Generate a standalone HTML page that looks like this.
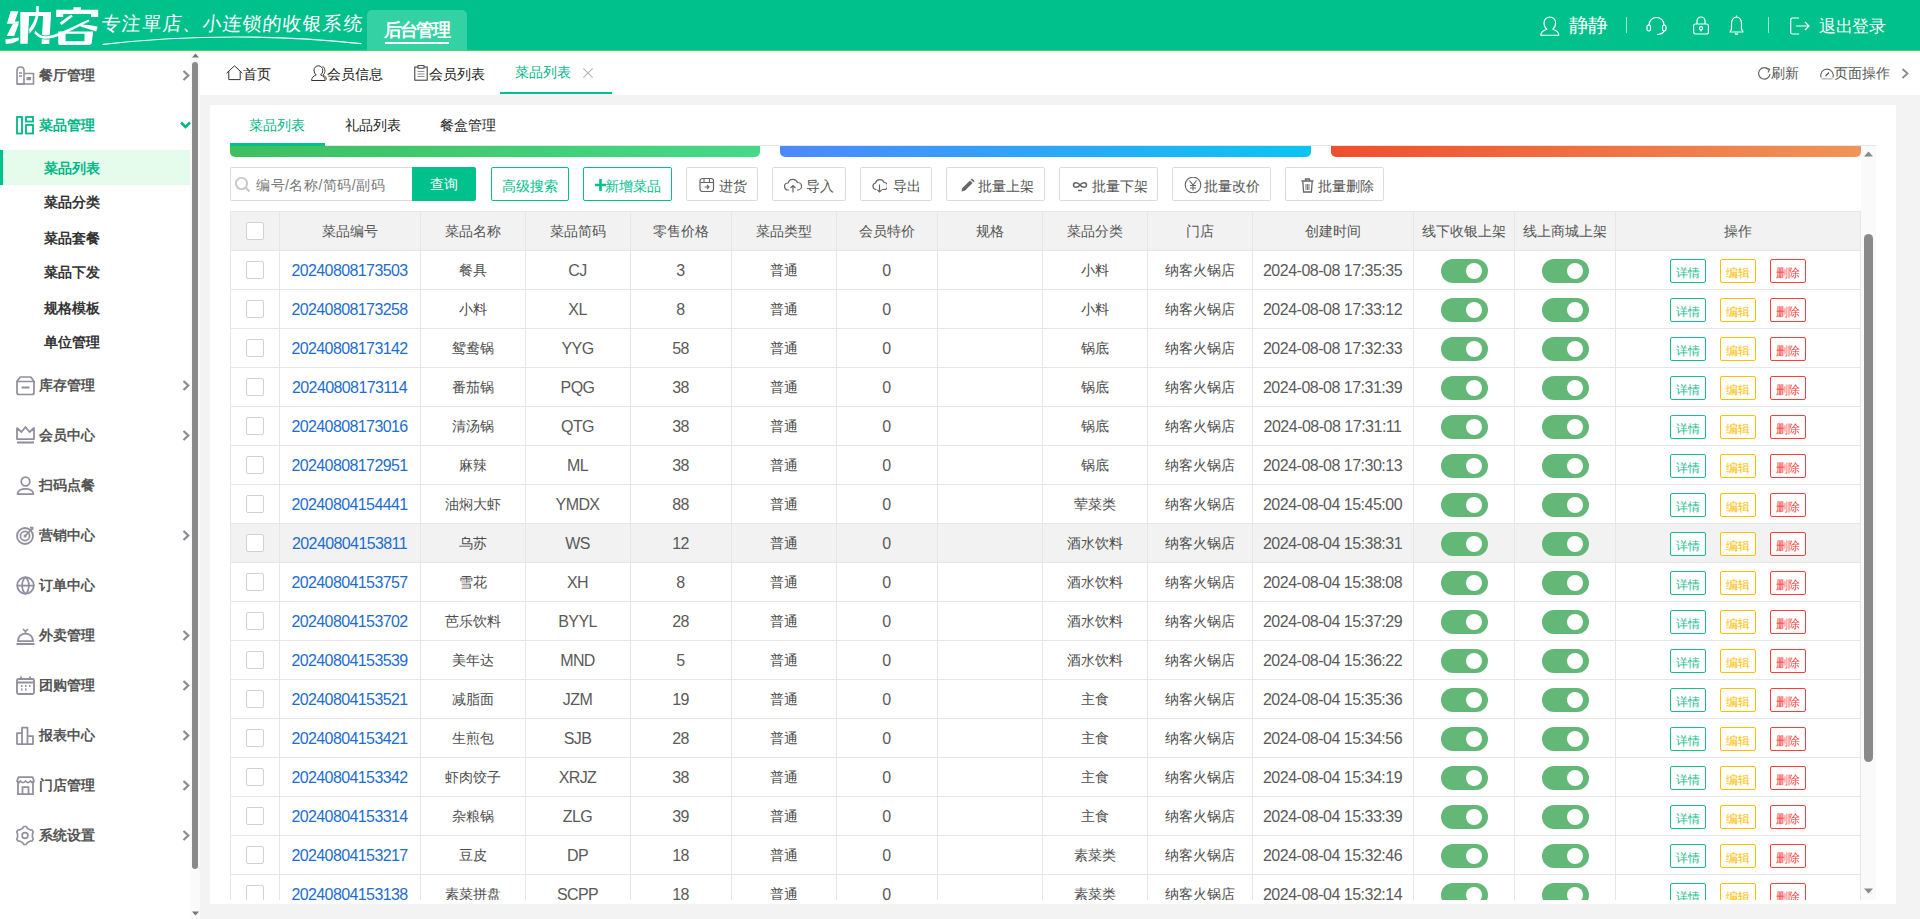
<!DOCTYPE html><html><head><meta charset="utf-8"><title>菜品列表</title><style>
*{box-sizing:border-box;margin:0;padding:0}
html,body{width:1920px;height:919px;overflow:hidden;background:#f3f3f3;font-family:"Liberation Sans",sans-serif;color:#333}
.a{position:absolute;white-space:nowrap}
.ic{position:absolute;overflow:visible}
#hdr{position:absolute;left:0;top:0;width:1920px;height:50px;background:#00c18c}
#hdrline{position:absolute;left:0;top:50px;width:1920px;height:1px;background:#4cd270}
#side{position:absolute;left:0;top:51px;width:190px;height:868px;background:#fff}
#strack{position:absolute;left:190px;top:51px;width:10px;height:868px;background:#fafafa}
#tabbar{position:absolute;left:200px;top:51px;width:1720px;height:44px;background:#fff}
#card{position:absolute;left:210px;top:105px;width:1686px;height:799px;background:#fff}
.mi{position:absolute;left:39px;font-size:14px;font-weight:bold;color:#555;line-height:20px}
.si{position:absolute;left:44px;font-size:14px;font-weight:bold;color:#333;line-height:20px}
.t14{font-size:14px;line-height:20px}
.btn{position:absolute;top:167px;height:34px;border:1px solid #dcdcdc;border-radius:2px;background:#fff;color:#555;font-size:14px;line-height:32px}
.btn span{position:absolute;top:1px}
.cell{position:absolute;text-align:center;font-size:14px;line-height:20px;color:#4e4e4e}
.hcell{position:absolute;text-align:center;font-size:14px;line-height:20px;color:#555}
.vl{position:absolute;width:1px;background:#e6e6e6}
.hl{position:absolute;height:1px;background:#e6e6e6}
.cb{position:absolute;width:18px;height:18px;border:1px solid #d2d2d2;border-radius:2px;background:#fff}
.sw{position:absolute;width:47px;height:24px;border-radius:12px;background:#63b877}
.sw i{position:absolute;left:25px;top:4px;width:16px;height:16px;border-radius:50%;background:#fff}
.ob{position:absolute;width:36px;height:24px;border:1px solid;border-radius:2px;font-size:12px;line-height:26px;text-align:center;background:#fff}
</style></head><body>
<div id="hdr"></div><div id="hdrline"></div>
<svg class="ic" style="left:0;top:0;width:100px;height:50px" viewBox="0 0 100 50"><g fill="#fff">
<path d="M10.6 11.3 L18.4 11.3 L14.9 21.6 L19 21.6 L18.4 23.8 L6.9 23.8 Z"/>
<path d="M12.8 23.8 L18.8 23.8 L14.2 36 L6.6 36 Z"/>
<path d="M5.3 39.6 L18.8 37.6 L18.8 40.2 L12.5 43.3 L5.9 43.9 Z"/>
<path d="M20.3 12 L51 12 L51 16 L29.2 16 L27.6 43.8 L20.3 43.8 Z"/>
<path d="M43.2 15 L51 15 L49.2 44 L41.5 44 Z"/>
<path d="M36.2 6 L38.8 6 L38.8 13 C38 22 34 29 29.5 33.5 L29.2 29 C32.5 24 35.5 19 36.2 13 Z"/>
<path d="M35 30.5 C39 34.5 42 36.5 46 36.3 C56 36 72 27 88.5 19.6 L89.5 21.2 C74 29 57 38.8 45.5 38.8 C40.5 38.8 37.5 36.5 34.5 33.3 Z" stroke="#00c18c" stroke-width="1.6"/><path d="M35 30.5 C39 34.5 42 36.5 46 36.3 C56 36 72 27 88.5 19.6 L89.5 21.2 C74 29 57 38.8 45.5 38.8 C40.5 38.8 37.5 36.5 34.5 33.3 Z"/>
<path d="M73.4 7.3 L81 7.3 L81 10.2 L73.4 10.2 Z"/>
<path d="M56.2 9.7 L98.2 9.7 L98.2 16.9 L91 16.9 L91 14 L63.2 14 L63.2 16.9 L56.2 16.9 Z"/>
<path d="M59.7 22.7 L71.2 14.6 L72.8 16.6 L61.6 24.9 Z"/>
<path d="M80.2 24.6 C86 24.6 92 25.5 97.6 26.4 L96.2 31.6 C91 30 86 28 80.8 26.8 Z"/>
<path fill-rule="evenodd" d="M58.2 31.5 L93.2 31.5 L91.8 42.5 C91.5 44.5 90 45 88 45 L60 45 C58.5 45 58.2 44 58.2 42.5 Z M65.6 33.8 L84.5 33.8 L84.5 41.3 L65.6 41.3 Z"/>
</g></svg>
<div class="a" style="left:102px;top:12px;font-size:19px;line-height:24px;color:#fff;letter-spacing:1.1px;font-weight:400;transform:skewX(-6deg)">专注單店、小连锁的收银系统</div>
<svg class="ic" style="left:100px;top:34px;width:264px;height:14px" viewBox="0 0 264 14"><path d="M3 10.4 Q130 -4 261 9.6" stroke="#fff" stroke-width="1.2" fill="none" stroke-linecap="round"/></svg>
<div class="a" style="left:367px;top:10px;width:100px;height:40px;background:#33d1a3;border-radius:5px 5px 0 0"></div>
<div class="a" style="left:384px;top:18px;font-size:18px;line-height:24px;font-weight:bold;color:#fff;letter-spacing:-1.8px">后台管理</div>
<div class="a" style="left:385px;top:42px;width:64px;height:2px;background:#fff"></div>
<svg class="ic" style="left:1540px;top:16px;width:20px;height:20px" viewBox="0 0 20 20" ><path d="M0.8 19.2 Q0.8 15 6.8 13.2 Q4 11 4 6.8 A5.8 5.8 0 0 1 15.6 6.8 Q15.6 11 12.8 13.2 Q18.8 15 18.8 19.2 Z" stroke="#fff" stroke-width="1.15" fill="none" stroke-linejoin="round"/></svg>
<div class="a" style="left:1569px;top:13px;font-size:20px;line-height:24px;color:#fff;letter-spacing:-1.5px;font-weight:500">静静</div>
<div class="a" style="left:1626px;top:17px;width:1px;height:16px;background:rgba(255,255,255,0.6)"></div>
<svg class="ic" style="left:1646px;top:15px;width:21px;height:20px" viewBox="0 0 21 20" ><path d="M3 11 V10 A7.5 7.5 0 0 1 18 10 V11" stroke="#fff" stroke-width="1.2" fill="none"/><rect x="1" y="10" width="3.5" height="6" rx="1.7" stroke="#fff" stroke-width="1.2" fill="none"/><rect x="16.5" y="10" width="3.5" height="6" rx="1.7" stroke="#fff" stroke-width="1.2" fill="none"/><path d="M18 16 Q17 19 11 19.5" stroke="#fff" stroke-width="1.2" fill="none"/></svg>
<svg class="ic" style="left:1693px;top:15px;width:16px;height:20px" viewBox="0 0 16 20" ><path d="M4 9 V6 A4 4 0 0 1 12 6 V9" stroke="#fff" stroke-width="1.2" fill="none"/><rect x="0.6" y="9" width="14.8" height="10" rx="2" stroke="#fff" stroke-width="1.2" fill="none"/><circle cx="8" cy="13.2" r="1.6" stroke="#fff" stroke-width="1.1" fill="none"/><path d="M8 14.8 V16.5" stroke="#fff" stroke-width="1.1"/></svg>
<svg class="ic" style="left:1729px;top:15px;width:15px;height:20px" viewBox="0 0 15 20" ><path d="M7.5 2 C3 2.5 2.5 6 2.5 9 V14 L1 17 H14 L12.5 14 V9 C12.5 6 12 2.5 7.5 2 Z" stroke="#fff" stroke-width="1.2" fill="none" stroke-linejoin="round"/><path d="M6 18.5 Q7.5 20 9 18.5" stroke="#fff" stroke-width="1.2" fill="none"/><path d="M7.5 0.5 V2" stroke="#fff" stroke-width="1.2"/></svg>
<div class="a" style="left:1768px;top:17px;width:1px;height:16px;background:rgba(255,255,255,0.6)"></div>
<svg class="ic" style="left:1790px;top:17px;width:20px;height:18px" viewBox="0 0 20 18" ><path d="M9 1 H2.5 A1.8 1.8 0 0 0 0.7 2.8 V15.2 A1.8 1.8 0 0 0 2.5 17 H9" stroke="#fff" stroke-width="1.2" fill="none"/><path d="M6 9 H19 M15 5 L19 9 L15 13" stroke="#fff" stroke-width="1.2" fill="none"/></svg>
<div class="a" style="left:1819px;top:15px;font-size:16.5px;line-height:22px;color:#fff;letter-spacing:-0.3px">退出登录</div>
<div id="side"></div><div id="strack"></div>
<div class="a" style="left:192px;top:62px;width:6px;height:807px;background:#8a8a8a;border-radius:3px"></div>
<svg class="ic" style="left:192px;top:53px;width:7px;height:5px" viewBox="0 0 7 5"><path d="M0 4.5 L3.5 0.5 L7 4.5Z" fill="#777"/></svg>
<svg class="ic" style="left:192px;top:911px;width:7px;height:5px" viewBox="0 0 7 5"><path d="M0 0.5 L3.5 4.5 L7 0.5Z" fill="#777"/></svg>
<svg class="ic" style="left:16px;top:66px;width:19px;height:19px" viewBox="0 0 19 19" ><path d="M1 18 V4.5 Q1 1 4.5 1 Q8 1 8 4.5 V18 Z" stroke="#918e9e" stroke-width="1.6" fill="none"/><path d="M8 7.5 H17.5 V18 H1" stroke="#918e9e" stroke-width="1.6" fill="none"/><path d="M3 7 H6 M3 10 H6" stroke="#918e9e" stroke-width="1.3"/><rect x="10.5" y="11" width="4.5" height="3.2" fill="#918e9e"/></svg>
<div class="mi" style="top:65px">餐厅管理</div>
<svg class="ic" style="left:182px;top:70px;width:8px;height:11px" viewBox="0 0 8 11"><path d="M1.5 1 L6.3 5.5 L1.5 10" stroke="#8a8a96" stroke-width="2.2" fill="none"/></svg>
<svg class="ic" style="left:16px;top:376px;width:19px;height:19px" viewBox="0 0 19 19" ><path d="M1 5.5 V16.5 Q1 18.5 3 18.5 H16 Q18 18.5 18 16.5 V5.5" stroke="#918e9e" stroke-width="1.7" fill="none"/><path d="M0.8 5.5 L4.3 1 H14.7 L18.2 5.5 Z" stroke="#918e9e" stroke-width="1.7" fill="none" stroke-linejoin="round"/><path d="M6.3 11.5 H12.7" stroke="#918e9e" stroke-width="1.9" stroke-linecap="round"/></svg>
<div class="mi" style="top:375px">库存管理</div>
<svg class="ic" style="left:182px;top:380px;width:8px;height:11px" viewBox="0 0 8 11"><path d="M1.5 1 L6.3 5.5 L1.5 10" stroke="#8a8a96" stroke-width="2.2" fill="none"/></svg>
<svg class="ic" style="left:16px;top:426px;width:19px;height:19px" viewBox="0 0 19 19" ><path d="M1 13 V2 L5.5 6 L9.5 1 L13.5 6 L18 2 V13 Z" stroke="#918e9e" stroke-width="1.75" fill="none" stroke-linejoin="round"/><path d="M1 16.5 H18" stroke="#918e9e" stroke-width="2.05"/></svg>
<div class="mi" style="top:425px">会员中心</div>
<svg class="ic" style="left:182px;top:430px;width:8px;height:11px" viewBox="0 0 8 11"><path d="M1.5 1 L6.3 5.5 L1.5 10" stroke="#8a8a96" stroke-width="2.2" fill="none"/></svg>
<svg class="ic" style="left:16px;top:476px;width:19px;height:19px" viewBox="0 0 19 19" ><circle cx="9.5" cy="5.5" r="4.3" stroke="#918e9e" stroke-width="1.75" fill="none"/><path d="M1.5 18 C2 11 17 11 17.5 18 Z" stroke="#918e9e" stroke-width="1.75" fill="none" stroke-linejoin="round"/></svg>
<div class="mi" style="top:475px">扫码点餐</div>
<svg class="ic" style="left:16px;top:526px;width:19px;height:19px" viewBox="0 0 19 19" ><circle cx="9" cy="10" r="8" stroke="#918e9e" stroke-width="1.85" fill="none"/><circle cx="9" cy="10" r="4.6" stroke="#918e9e" stroke-width="1.75" fill="none"/><circle cx="9" cy="10" r="1.5" fill="#918e9e"/><path d="M9 10 L16 3 M14 1.5 L16.5 1.5 L16.5 4" stroke="#918e9e" stroke-width="1.75" fill="none"/></svg>
<div class="mi" style="top:525px">营销中心</div>
<svg class="ic" style="left:182px;top:530px;width:8px;height:11px" viewBox="0 0 8 11"><path d="M1.5 1 L6.3 5.5 L1.5 10" stroke="#8a8a96" stroke-width="2.2" fill="none"/></svg>
<svg class="ic" style="left:16px;top:576px;width:19px;height:19px" viewBox="0 0 19 19" ><circle cx="9.5" cy="9.5" r="8.3" stroke="#918e9e" stroke-width="1.85" fill="none"/><path d="M1.2 9.5 H17.8 M9.5 1.2 C5 5 5 14 9.5 17.8 M9.5 1.2 C14 5 14 14 9.5 17.8" stroke="#918e9e" stroke-width="1.75" fill="none"/></svg>
<div class="mi" style="top:575px">订单中心</div>
<svg class="ic" style="left:16px;top:626px;width:19px;height:19px" viewBox="0 0 19 19" ><path d="M2 15 A7.5 7.5 0 0 1 17 15 Z" stroke="#918e9e" stroke-width="1.75" fill="none"/><path d="M0.5 18 H18.5" stroke="#918e9e" stroke-width="1.95"/><path d="M7 3 L9.5 5.5 L12 3 M9.5 5.5 V7.5" stroke="#918e9e" stroke-width="1.65" fill="none"/></svg>
<div class="mi" style="top:625px">外卖管理</div>
<svg class="ic" style="left:182px;top:630px;width:8px;height:11px" viewBox="0 0 8 11"><path d="M1.5 1 L6.3 5.5 L1.5 10" stroke="#8a8a96" stroke-width="2.2" fill="none"/></svg>
<svg class="ic" style="left:16px;top:676px;width:19px;height:19px" viewBox="0 0 19 19" ><rect x="1" y="3" width="17" height="15" rx="1.5" stroke="#918e9e" stroke-width="1.85" fill="none"/><path d="M1 6.5 H18 M5 0.5 V4 M14 0.5 V4" stroke="#918e9e" stroke-width="1.85"/><path d="M5 10 H6.5 M9 10 H10.5 M13 10 H14.5 M5 13.5 H6.5 M9 13.5 H10.5" stroke="#918e9e" stroke-width="1.85"/></svg>
<div class="mi" style="top:675px">团购管理</div>
<svg class="ic" style="left:182px;top:680px;width:8px;height:11px" viewBox="0 0 8 11"><path d="M1.5 1 L6.3 5.5 L1.5 10" stroke="#8a8a96" stroke-width="2.2" fill="none"/></svg>
<svg class="ic" style="left:16px;top:726px;width:19px;height:19px" viewBox="0 0 19 19" ><path d="M1 18 V7 H6 V18 M6 18 V1.5 H11.5 V18 M11.5 18 V10 H17 V18 Z M0.5 18 H17.5" stroke="#918e9e" stroke-width="1.75" fill="none" stroke-linejoin="round"/></svg>
<div class="mi" style="top:725px">报表中心</div>
<svg class="ic" style="left:182px;top:730px;width:8px;height:11px" viewBox="0 0 8 11"><path d="M1.5 1 L6.3 5.5 L1.5 10" stroke="#8a8a96" stroke-width="2.2" fill="none"/></svg>
<svg class="ic" style="left:16px;top:776px;width:19px;height:19px" viewBox="0 0 19 19" ><path d="M2 5 V18 H17 V5" stroke="#918e9e" stroke-width="1.75" fill="none"/><path d="M1 5 L2.5 1 H16.5 L18 5 Q16.5 8 14.5 5 Q12 8 9.5 5 Q7 8 4.5 5 Q2.5 8 1 5Z" stroke="#918e9e" stroke-width="1.75" fill="none" stroke-linejoin="round"/><path d="M6.5 18 V11 H12.5 V18" stroke="#918e9e" stroke-width="1.75" fill="none"/></svg>
<div class="mi" style="top:775px">门店管理</div>
<svg class="ic" style="left:182px;top:780px;width:8px;height:11px" viewBox="0 0 8 11"><path d="M1.5 1 L6.3 5.5 L1.5 10" stroke="#8a8a96" stroke-width="2.2" fill="none"/></svg>
<svg class="ic" style="left:16px;top:826px;width:19px;height:19px" viewBox="0 0 19 19" ><path d="M6.65 2.27 L7.87 0.57 L10.13 0.57 L11.35 2.27 L14.09 3.85 L16.17 4.06 L17.30 6.01 L16.43 7.92 L16.43 11.08 L17.30 12.99 L16.17 14.94 L14.09 15.15 L11.35 16.73 L10.13 18.43 L7.87 18.43 L6.65 16.73 L3.91 15.15 L1.83 14.94 L0.70 12.99 L1.57 11.08 L1.57 7.92 L0.70 6.01 L1.83 4.06 L3.91 3.85Z" stroke="#918e9e" stroke-width="1.6" fill="none" stroke-linejoin="round"/><circle cx="9" cy="9.5" r="2.9" stroke="#918e9e" stroke-width="1.7" fill="none"/></svg>
<div class="mi" style="top:825px">系统设置</div>
<svg class="ic" style="left:182px;top:830px;width:8px;height:11px" viewBox="0 0 8 11"><path d="M1.5 1 L6.3 5.5 L1.5 10" stroke="#8a8a96" stroke-width="2.2" fill="none"/></svg>
<svg class="ic" style="left:16px;top:116px;width:19px;height:19px" viewBox="0 0 19 19" ><rect x="1" y="1" width="5" height="16.5" stroke="#00b887" stroke-width="1.8" fill="none"/><rect x="10" y="1" width="7" height="4.5" stroke="#00b887" stroke-width="1.8" fill="none"/><rect x="10" y="9" width="7" height="8.5" stroke="#00b887" stroke-width="1.8" fill="none"/></svg>
<div class="mi" style="top:115px;color:#00b887">菜品管理</div>
<svg class="ic" style="left:180px;top:121px;width:11px;height:8px" viewBox="0 0 11 8"><path d="M1 1.5 L5.5 6 L10 1.5" stroke="#00b887" stroke-width="2.5" fill="none"/></svg>
<div class="a" style="left:0;top:150px;width:190px;height:35px;background:#e5fbeb"></div>
<div class="a" style="left:0;top:150px;width:3px;height:35px;background:#00c18c"></div>
<div class="si" style="top:158px;color:#00b887">菜品列表</div>
<div class="si" style="top:192px;color:#333">菜品分类</div>
<div class="si" style="top:228px;color:#333">菜品套餐</div>
<div class="si" style="top:262px;color:#333">菜品下发</div>
<div class="si" style="top:298px;color:#333">规格模板</div>
<div class="si" style="top:332px;color:#333">单位管理</div>
<div id="tabbar"></div>
<svg class="ic" style="left:226px;top:65px;width:17px;height:16px" viewBox="0 0 17 16" ><path d="M0.6 8.2 L8.5 0.8 L16.4 8.2 M2.8 6.2 V14.6 H14.2 V6.2" stroke="#333" stroke-width="1" fill="none"/></svg>
<div class="a t14" style="left:243px;top:64px;color:#222">首页</div>
<svg class="ic" style="left:311px;top:65px;width:16px;height:16px" viewBox="0 0 16 16" ><path d="M0.6 15.5 Q0.6 11.5 5.2 10 Q3 8.4 3 5.2 A4.4 4.4 0 0 1 11.8 5.2 Q11.8 8.4 9.6 10 Q14.2 11.5 14.2 15.5 Z" stroke="#333" stroke-width="1" fill="none" stroke-linejoin="round"/><path d="M11.5 1.3 Q14.5 2.5 14 6.5 Q13.6 9 12 10 Q15.6 11.5 15.6 14.5" stroke="#333" stroke-width="0.9" fill="none"/></svg>
<div class="a t14" style="left:327px;top:64px;color:#222">会员信息</div>
<svg class="ic" style="left:414px;top:65px;width:14px;height:16px" viewBox="0 0 14 16" ><rect x="0.8" y="2" width="12.4" height="13.2" stroke="#333" stroke-width="1" fill="none"/><rect x="4" y="0.6" width="6" height="2.6" stroke="#333" stroke-width="0.9" fill="#fff"/><path d="M3.5 6.5 H10.5 M3.5 9 H10.5 M3.5 11.5 H10.5" stroke="#777" stroke-width="0.8"/></svg>
<div class="a t14" style="left:429px;top:64px;color:#222">会员列表</div>
<div class="a t14" style="left:515px;top:62px;color:#00b887">菜品列表</div>
<svg class="ic" style="left:583px;top:68px;width:10px;height:10px" viewBox="0 0 10 10"><path d="M0.3 0.3 L9.7 9.7 M9.7 0.3 L0.3 9.7" stroke="#b8b8b8" stroke-width="1.2"/></svg>
<div class="a" style="left:500px;top:92px;width:112px;height:2px;background:#00c18c"></div>
<svg class="ic" style="left:1758px;top:67px;width:13px;height:13px" viewBox="0 0 13 13" ><path d="M10.5 2.5 A5.7 5.7 0 1 0 12 7" stroke="#666" stroke-width="1.2" fill="none"/><path d="M8 1 L11.5 2.3 L10 5.5" stroke="#666" stroke-width="1.2" fill="none"/></svg>
<div class="a t14" style="left:1771px;top:63px;color:#555">刷新</div>
<svg class="ic" style="left:1820px;top:67px;width:14px;height:13px" viewBox="0 0 14 13" ><path d="M1.2 10.5 A6.2 6.2 0 1 1 12.8 10.5" stroke="#666" stroke-width="1.15" fill="none"/><path d="M1.5 11.8 H12.5" stroke="#c2c2c2" stroke-width="1.6"/><path d="M5.5 9 L9 5.5" stroke="#555" stroke-width="1.2"/></svg>
<div class="a t14" style="left:1834px;top:63px;color:#555">页面操作</div>
<svg class="ic" style="left:1901px;top:68px;width:8px;height:11px" viewBox="0 0 8 11"><path d="M1.5 1 L6.5 5.5 L1.5 10" stroke="#8a8a96" stroke-width="1.8" fill="none"/></svg>
<div id="card"></div>
<div class="a t14" style="left:249px;top:115px;color:#00b887">菜品列表</div>
<div class="a t14" style="left:345px;top:115px;color:#222">礼品列表</div>
<div class="a t14" style="left:440px;top:115px;color:#222">餐盒管理</div>
<div class="a" style="left:230px;top:145px;width:1646px;height:1px;background:#e6e6e6"></div>
<div class="a" style="left:230px;top:143px;width:95px;height:3px;background:#00c18c;z-index:2"></div>
<div class="a" style="left:230px;top:146px;width:1646px;height:754px;overflow:hidden">
<div class="a" style="left:0;top:0;width:530px;height:11px;border-radius:0 0 5px 5px;background:linear-gradient(90deg,#3dbf60,#46d98a)"></div>
<div class="a" style="left:550px;top:0;width:531px;height:11px;border-radius:0 0 5px 5px;background:linear-gradient(90deg,#4e88fd,#0bc5f1)"></div>
<div class="a" style="left:1101px;top:0;width:530px;height:11px;border-radius:0 0 5px 5px;background:linear-gradient(90deg,#f04e2e,#f09459)"></div>
<div class="a" style="left:1631px;top:0;width:15px;height:754px;background:#fafafa"></div>
<svg class="ic" style="left:1634px;top:5px;width:9px;height:6px" viewBox="0 0 9 6"><path d="M0 5.5 L4.5 0.5 L9 5.5Z" fill="#888"/></svg>
<svg class="ic" style="left:1634px;top:742px;width:9px;height:6px" viewBox="0 0 9 6"><path d="M0 0.5 L4.5 5.5 L9 0.5Z" fill="#888"/></svg>
<div class="a" style="left:1634px;top:88px;width:9px;height:528px;background:#8a8a8a;border-radius:4.5px"></div>
<div class="a" style="left:0;top:21px;width:183px;height:34px;border:1px solid #dcdcdc;border-right:none;border-radius:2px 0 0 2px;background:#fff"></div>
<svg class="ic" style="left:5px;top:31px;width:15px;height:15px" viewBox="0 0 15 15" ><circle cx="6.5" cy="6.5" r="5.6" stroke="#c8c8c8" stroke-width="1.9" fill="none"/><path d="M10.5 10.5 L14.5 14.5" stroke="#c8c8c8" stroke-width="2.2"/></svg>
<div class="a t14" style="left:26px;top:29px;color:#777;letter-spacing:0.5px">编号/名称/简码/副码</div>
<div class="a" style="left:182px;top:21px;width:64px;height:34px;background:#00c18c;border-radius:0 2px 2px 0;color:#fff;font-size:14px;line-height:34px;text-align:center">查询</div>
<div class="btn" style="left:261px;width:78px;top:21px;border-color:#00c18c;color:#00c18c"><span style="left:10px;top:2px">高级搜索</span></div>
<div class="btn" style="left:353px;width:89px;top:21px;border-color:#00c18c;color:#00c18c"><svg style="position:absolute;left:11px;top:9px;width:11px;height:16px" viewBox="0 0 11 16"><path d="M5.5 2 V14 M0 8 H11" stroke="#00c18c" stroke-width="2.6"/></svg><span style="left:21px;top:2px">新增菜品</span></div>
<div class="btn" style="left:456px;width:72px;top:21px;border-color:#dcdcdc;color:#555"><svg style="position:absolute;left:12px;top:9px;width:16px;height:16px" viewBox="0 0 16 16"><rect x="1" y="1.5" width="13.5" height="13" rx="2.5" stroke="#666" stroke-width="1.2" fill="none"/><path d="M1 5.5 H14.5 M5 1.5 V5.5 M10.5 1.5 V5.5" stroke="#666" stroke-width="1.1"/><path d="M5.5 10 H10 M8 8 L10 10 L8 12" stroke="#666" stroke-width="1.1" fill="none"/></svg><span style="left:32px;top:2px">进货</span></div>
<div class="btn" style="left:542px;width:74px;top:21px;border-color:#dcdcdc;color:#555"><svg style="position:absolute;left:11px;top:9px;width:18px;height:16px" viewBox="0 0 18 16"><path d="M5 13 H4 A3.5 3.5 0 0 1 4 6 A5 5 0 0 1 13.5 5.5 A3.7 3.7 0 0 1 14 13 H13" stroke="#666" stroke-width="1.2" fill="none"/><path d="M9 15.5 V8.5 M6.5 11 L9 8.5 L11.5 11" stroke="#666" stroke-width="1.2" fill="none"/></svg><span style="left:33px;top:2px">导入</span></div>
<div class="btn" style="left:630px;width:72px;top:21px;border-color:#dcdcdc;color:#555"><svg style="position:absolute;left:11px;top:9px;width:15px;height:16px" viewBox="0 0 15 16"><path d="M4.5 12.5 H4 A3.3 3.3 0 0 1 3.5 6 A4.5 4.5 0 0 1 12 5.5 A3.4 3.4 0 0 1 12 12.5 H10" stroke="#666" stroke-width="1.2" fill="none"/><path d="M7.5 7.5 V15 M5.3 12.8 L7.5 15 L9.7 12.8" stroke="#666" stroke-width="1.2" fill="none"/></svg><span style="left:32px;top:2px">导出</span></div>
<div class="btn" style="left:716px;width:99px;top:21px;border-color:#dcdcdc;color:#555"><svg style="position:absolute;left:13px;top:9px;width:16px;height:16px" viewBox="0 0 16 16"><path d="M1.5 14.5 L2.2 11.2 L10 3.4 L12.6 6 L4.8 13.8 Z" fill="#666"/><path d="M10.8 2.6 L12 1.4 L14.6 4 L13.4 5.2Z" fill="#666"/></svg><span style="left:31px;top:2px">批量上架</span></div>
<div class="btn" style="left:829px;width:99px;top:21px;border-color:#dcdcdc;color:#555"><svg style="position:absolute;left:12px;top:9px;width:16px;height:16px" viewBox="0 0 16 16"><path d="M8 8 C6 5 1.5 5 1.5 8 C1.5 11 6 11 8 8 C10 5 14.5 5 14.5 8 C14.5 11 10 11 8 8" stroke="#666" stroke-width="1.5" fill="none"/><path d="M6 13.5 H10" stroke="#666" stroke-width="1.4"/></svg><span style="left:32px;top:2px">批量下架</span></div>
<div class="btn" style="left:942px;width:99px;top:21px;border-color:#dcdcdc;color:#555"><svg style="position:absolute;left:11px;top:9px;width:18px;height:16px" viewBox="0 0 18 16"><circle cx="9" cy="8" r="7.8" stroke="#666" stroke-width="1.1" fill="none"/><path d="M5.5 3.5 L9 8 L12.5 3.5 M9 8 V13.5 M6 8.5 H12 M6 11 H12" stroke="#666" stroke-width="1.1" fill="none"/></svg><span style="left:31px;top:2px">批量改价</span></div>
<div class="btn" style="left:1055px;width:99px;top:21px;border-color:#dcdcdc;color:#555"><svg style="position:absolute;left:14px;top:9px;width:15px;height:16px" viewBox="0 0 15 16"><path d="M1.5 4 H13.5 M5.5 4 V2 H9.5 V4" stroke="#666" stroke-width="1.3" fill="none"/><path d="M2.8 4.5 L3.6 15 H11.4 L12.2 4.5" stroke="#666" stroke-width="1.3" fill="none"/><path d="M6 7 V13 M7.5 7 V13 M9 7 V13" stroke="#666" stroke-width="0.9"/></svg><span style="left:32px;top:2px">批量删除</span></div>
<div class="a" style="left:0;top:65px;width:1631px;height:39px;background:#f2f2f2"></div>
<div class="a" style="left:0;top:377px;width:1631px;height:39px;background:#f2f2f2"></div>
<div class="hl" style="left:0;top:65px;width:1631px"></div>
<div class="hl" style="left:0;top:104px;width:1631px"></div>
<div class="hl" style="left:0;top:143px;width:1631px"></div>
<div class="hl" style="left:0;top:182px;width:1631px"></div>
<div class="hl" style="left:0;top:221px;width:1631px"></div>
<div class="hl" style="left:0;top:260px;width:1631px"></div>
<div class="hl" style="left:0;top:299px;width:1631px"></div>
<div class="hl" style="left:0;top:338px;width:1631px"></div>
<div class="hl" style="left:0;top:377px;width:1631px"></div>
<div class="hl" style="left:0;top:416px;width:1631px"></div>
<div class="hl" style="left:0;top:455px;width:1631px"></div>
<div class="hl" style="left:0;top:494px;width:1631px"></div>
<div class="hl" style="left:0;top:533px;width:1631px"></div>
<div class="hl" style="left:0;top:572px;width:1631px"></div>
<div class="hl" style="left:0;top:611px;width:1631px"></div>
<div class="hl" style="left:0;top:650px;width:1631px"></div>
<div class="hl" style="left:0;top:689px;width:1631px"></div>
<div class="hl" style="left:0;top:728px;width:1631px"></div>
<div class="hl" style="left:0;top:767px;width:1631px"></div>
<div class="vl" style="left:0px;top:65px;height:703px"></div>
<div class="vl" style="left:49px;top:65px;height:703px"></div>
<div class="vl" style="left:190px;top:65px;height:703px"></div>
<div class="vl" style="left:295px;top:65px;height:703px"></div>
<div class="vl" style="left:400px;top:65px;height:703px"></div>
<div class="vl" style="left:501px;top:65px;height:703px"></div>
<div class="vl" style="left:606px;top:65px;height:703px"></div>
<div class="vl" style="left:707px;top:65px;height:703px"></div>
<div class="vl" style="left:812px;top:65px;height:703px"></div>
<div class="vl" style="left:917px;top:65px;height:703px"></div>
<div class="vl" style="left:1022px;top:65px;height:703px"></div>
<div class="vl" style="left:1183px;top:65px;height:703px"></div>
<div class="vl" style="left:1284px;top:65px;height:703px"></div>
<div class="vl" style="left:1385px;top:65px;height:703px"></div>
<div class="vl" style="left:1630px;top:65px;height:703px"></div>
<div class="cb" style="left:16px;top:76px"></div>
<div class="hcell" style="left:49px;width:141px;top:75px">菜品编号</div>
<div class="hcell" style="left:190px;width:105px;top:75px">菜品名称</div>
<div class="hcell" style="left:295px;width:105px;top:75px">菜品简码</div>
<div class="hcell" style="left:400px;width:101px;top:75px">零售价格</div>
<div class="hcell" style="left:501px;width:105px;top:75px">菜品类型</div>
<div class="hcell" style="left:606px;width:101px;top:75px">会员特价</div>
<div class="hcell" style="left:707px;width:105px;top:75px">规格</div>
<div class="hcell" style="left:812px;width:105px;top:75px">菜品分类</div>
<div class="hcell" style="left:917px;width:105px;top:75px">门店</div>
<div class="hcell" style="left:1022px;width:161px;top:75px">创建时间</div>
<div class="hcell" style="left:1183px;width:101px;top:75px">线下收银上架</div>
<div class="hcell" style="left:1284px;width:101px;top:75px">线上商城上架</div>
<div class="hcell" style="left:1385px;width:245px;top:75px">操作</div>
<div class="cb" style="left:16px;top:115px"></div>
<div class="cell" style="left:49px;width:141px;top:114px;color:#1d6dcf;font-size:16px;letter-spacing:-0.6px;top:115px">20240808173503</div>
<div class="cell" style="left:190px;width:105px;top:114px;">餐具</div>
<div class="cell" style="left:295px;width:105px;top:114px;color:#5a5a5a;font-size:16px;letter-spacing:-0.6px;top:115px">CJ</div>
<div class="cell" style="left:400px;width:101px;top:114px;color:#5a5a5a;font-size:16px;letter-spacing:-0.6px;top:115px">3</div>
<div class="cell" style="left:501px;width:105px;top:114px;">普通</div>
<div class="cell" style="left:606px;width:101px;top:114px;color:#5a5a5a;font-size:16px;letter-spacing:-0.6px;top:115px">0</div>
<div class="cell" style="left:707px;width:105px;top:114px;"></div>
<div class="cell" style="left:812px;width:105px;top:114px;">小料</div>
<div class="cell" style="left:917px;width:105px;top:114px;">纳客火锅店</div>
<div class="cell" style="left:1022px;width:161px;top:114px;color:#5a5a5a;font-size:16px;letter-spacing:-0.5px;top:115px">2024-08-08 17:35:35</div>
<div class="sw" style="left:1211px;top:113px"><i></i></div>
<div class="sw" style="left:1312px;top:113px"><i></i></div>
<div class="ob" style="left:1440px;top:113px;border-color:#19be8f;color:#19be8f">详情</div>
<div class="ob" style="left:1490px;top:113px;border-color:#ffbe00;color:#ffbe00">编辑</div>
<div class="ob" style="left:1540px;top:113px;border-color:#ff3d3d;color:#ff3d3d">删除</div>
<div class="cb" style="left:16px;top:154px"></div>
<div class="cell" style="left:49px;width:141px;top:153px;color:#1d6dcf;font-size:16px;letter-spacing:-0.6px;top:154px">20240808173258</div>
<div class="cell" style="left:190px;width:105px;top:153px;">小料</div>
<div class="cell" style="left:295px;width:105px;top:153px;color:#5a5a5a;font-size:16px;letter-spacing:-0.6px;top:154px">XL</div>
<div class="cell" style="left:400px;width:101px;top:153px;color:#5a5a5a;font-size:16px;letter-spacing:-0.6px;top:154px">8</div>
<div class="cell" style="left:501px;width:105px;top:153px;">普通</div>
<div class="cell" style="left:606px;width:101px;top:153px;color:#5a5a5a;font-size:16px;letter-spacing:-0.6px;top:154px">0</div>
<div class="cell" style="left:707px;width:105px;top:153px;"></div>
<div class="cell" style="left:812px;width:105px;top:153px;">小料</div>
<div class="cell" style="left:917px;width:105px;top:153px;">纳客火锅店</div>
<div class="cell" style="left:1022px;width:161px;top:153px;color:#5a5a5a;font-size:16px;letter-spacing:-0.5px;top:154px">2024-08-08 17:33:12</div>
<div class="sw" style="left:1211px;top:152px"><i></i></div>
<div class="sw" style="left:1312px;top:152px"><i></i></div>
<div class="ob" style="left:1440px;top:152px;border-color:#19be8f;color:#19be8f">详情</div>
<div class="ob" style="left:1490px;top:152px;border-color:#ffbe00;color:#ffbe00">编辑</div>
<div class="ob" style="left:1540px;top:152px;border-color:#ff3d3d;color:#ff3d3d">删除</div>
<div class="cb" style="left:16px;top:193px"></div>
<div class="cell" style="left:49px;width:141px;top:192px;color:#1d6dcf;font-size:16px;letter-spacing:-0.6px;top:193px">20240808173142</div>
<div class="cell" style="left:190px;width:105px;top:192px;">鸳鸯锅</div>
<div class="cell" style="left:295px;width:105px;top:192px;color:#5a5a5a;font-size:16px;letter-spacing:-0.6px;top:193px">YYG</div>
<div class="cell" style="left:400px;width:101px;top:192px;color:#5a5a5a;font-size:16px;letter-spacing:-0.6px;top:193px">58</div>
<div class="cell" style="left:501px;width:105px;top:192px;">普通</div>
<div class="cell" style="left:606px;width:101px;top:192px;color:#5a5a5a;font-size:16px;letter-spacing:-0.6px;top:193px">0</div>
<div class="cell" style="left:707px;width:105px;top:192px;"></div>
<div class="cell" style="left:812px;width:105px;top:192px;">锅底</div>
<div class="cell" style="left:917px;width:105px;top:192px;">纳客火锅店</div>
<div class="cell" style="left:1022px;width:161px;top:192px;color:#5a5a5a;font-size:16px;letter-spacing:-0.5px;top:193px">2024-08-08 17:32:33</div>
<div class="sw" style="left:1211px;top:191px"><i></i></div>
<div class="sw" style="left:1312px;top:191px"><i></i></div>
<div class="ob" style="left:1440px;top:191px;border-color:#19be8f;color:#19be8f">详情</div>
<div class="ob" style="left:1490px;top:191px;border-color:#ffbe00;color:#ffbe00">编辑</div>
<div class="ob" style="left:1540px;top:191px;border-color:#ff3d3d;color:#ff3d3d">删除</div>
<div class="cb" style="left:16px;top:232px"></div>
<div class="cell" style="left:49px;width:141px;top:231px;color:#1d6dcf;font-size:16px;letter-spacing:-0.6px;top:232px">20240808173114</div>
<div class="cell" style="left:190px;width:105px;top:231px;">番茄锅</div>
<div class="cell" style="left:295px;width:105px;top:231px;color:#5a5a5a;font-size:16px;letter-spacing:-0.6px;top:232px">PQG</div>
<div class="cell" style="left:400px;width:101px;top:231px;color:#5a5a5a;font-size:16px;letter-spacing:-0.6px;top:232px">38</div>
<div class="cell" style="left:501px;width:105px;top:231px;">普通</div>
<div class="cell" style="left:606px;width:101px;top:231px;color:#5a5a5a;font-size:16px;letter-spacing:-0.6px;top:232px">0</div>
<div class="cell" style="left:707px;width:105px;top:231px;"></div>
<div class="cell" style="left:812px;width:105px;top:231px;">锅底</div>
<div class="cell" style="left:917px;width:105px;top:231px;">纳客火锅店</div>
<div class="cell" style="left:1022px;width:161px;top:231px;color:#5a5a5a;font-size:16px;letter-spacing:-0.5px;top:232px">2024-08-08 17:31:39</div>
<div class="sw" style="left:1211px;top:230px"><i></i></div>
<div class="sw" style="left:1312px;top:230px"><i></i></div>
<div class="ob" style="left:1440px;top:230px;border-color:#19be8f;color:#19be8f">详情</div>
<div class="ob" style="left:1490px;top:230px;border-color:#ffbe00;color:#ffbe00">编辑</div>
<div class="ob" style="left:1540px;top:230px;border-color:#ff3d3d;color:#ff3d3d">删除</div>
<div class="cb" style="left:16px;top:271px"></div>
<div class="cell" style="left:49px;width:141px;top:270px;color:#1d6dcf;font-size:16px;letter-spacing:-0.6px;top:271px">20240808173016</div>
<div class="cell" style="left:190px;width:105px;top:270px;">清汤锅</div>
<div class="cell" style="left:295px;width:105px;top:270px;color:#5a5a5a;font-size:16px;letter-spacing:-0.6px;top:271px">QTG</div>
<div class="cell" style="left:400px;width:101px;top:270px;color:#5a5a5a;font-size:16px;letter-spacing:-0.6px;top:271px">38</div>
<div class="cell" style="left:501px;width:105px;top:270px;">普通</div>
<div class="cell" style="left:606px;width:101px;top:270px;color:#5a5a5a;font-size:16px;letter-spacing:-0.6px;top:271px">0</div>
<div class="cell" style="left:707px;width:105px;top:270px;"></div>
<div class="cell" style="left:812px;width:105px;top:270px;">锅底</div>
<div class="cell" style="left:917px;width:105px;top:270px;">纳客火锅店</div>
<div class="cell" style="left:1022px;width:161px;top:270px;color:#5a5a5a;font-size:16px;letter-spacing:-0.5px;top:271px">2024-08-08 17:31:11</div>
<div class="sw" style="left:1211px;top:269px"><i></i></div>
<div class="sw" style="left:1312px;top:269px"><i></i></div>
<div class="ob" style="left:1440px;top:269px;border-color:#19be8f;color:#19be8f">详情</div>
<div class="ob" style="left:1490px;top:269px;border-color:#ffbe00;color:#ffbe00">编辑</div>
<div class="ob" style="left:1540px;top:269px;border-color:#ff3d3d;color:#ff3d3d">删除</div>
<div class="cb" style="left:16px;top:310px"></div>
<div class="cell" style="left:49px;width:141px;top:309px;color:#1d6dcf;font-size:16px;letter-spacing:-0.6px;top:310px">20240808172951</div>
<div class="cell" style="left:190px;width:105px;top:309px;">麻辣</div>
<div class="cell" style="left:295px;width:105px;top:309px;color:#5a5a5a;font-size:16px;letter-spacing:-0.6px;top:310px">ML</div>
<div class="cell" style="left:400px;width:101px;top:309px;color:#5a5a5a;font-size:16px;letter-spacing:-0.6px;top:310px">38</div>
<div class="cell" style="left:501px;width:105px;top:309px;">普通</div>
<div class="cell" style="left:606px;width:101px;top:309px;color:#5a5a5a;font-size:16px;letter-spacing:-0.6px;top:310px">0</div>
<div class="cell" style="left:707px;width:105px;top:309px;"></div>
<div class="cell" style="left:812px;width:105px;top:309px;">锅底</div>
<div class="cell" style="left:917px;width:105px;top:309px;">纳客火锅店</div>
<div class="cell" style="left:1022px;width:161px;top:309px;color:#5a5a5a;font-size:16px;letter-spacing:-0.5px;top:310px">2024-08-08 17:30:13</div>
<div class="sw" style="left:1211px;top:308px"><i></i></div>
<div class="sw" style="left:1312px;top:308px"><i></i></div>
<div class="ob" style="left:1440px;top:308px;border-color:#19be8f;color:#19be8f">详情</div>
<div class="ob" style="left:1490px;top:308px;border-color:#ffbe00;color:#ffbe00">编辑</div>
<div class="ob" style="left:1540px;top:308px;border-color:#ff3d3d;color:#ff3d3d">删除</div>
<div class="cb" style="left:16px;top:349px"></div>
<div class="cell" style="left:49px;width:141px;top:348px;color:#1d6dcf;font-size:16px;letter-spacing:-0.6px;top:349px">20240804154441</div>
<div class="cell" style="left:190px;width:105px;top:348px;">油焖大虾</div>
<div class="cell" style="left:295px;width:105px;top:348px;color:#5a5a5a;font-size:16px;letter-spacing:-0.6px;top:349px">YMDX</div>
<div class="cell" style="left:400px;width:101px;top:348px;color:#5a5a5a;font-size:16px;letter-spacing:-0.6px;top:349px">88</div>
<div class="cell" style="left:501px;width:105px;top:348px;">普通</div>
<div class="cell" style="left:606px;width:101px;top:348px;color:#5a5a5a;font-size:16px;letter-spacing:-0.6px;top:349px">0</div>
<div class="cell" style="left:707px;width:105px;top:348px;"></div>
<div class="cell" style="left:812px;width:105px;top:348px;">荤菜类</div>
<div class="cell" style="left:917px;width:105px;top:348px;">纳客火锅店</div>
<div class="cell" style="left:1022px;width:161px;top:348px;color:#5a5a5a;font-size:16px;letter-spacing:-0.5px;top:349px">2024-08-04 15:45:00</div>
<div class="sw" style="left:1211px;top:347px"><i></i></div>
<div class="sw" style="left:1312px;top:347px"><i></i></div>
<div class="ob" style="left:1440px;top:347px;border-color:#19be8f;color:#19be8f">详情</div>
<div class="ob" style="left:1490px;top:347px;border-color:#ffbe00;color:#ffbe00">编辑</div>
<div class="ob" style="left:1540px;top:347px;border-color:#ff3d3d;color:#ff3d3d">删除</div>
<div class="cb" style="left:16px;top:388px"></div>
<div class="cell" style="left:49px;width:141px;top:387px;color:#1d6dcf;font-size:16px;letter-spacing:-0.6px;top:388px">20240804153811</div>
<div class="cell" style="left:190px;width:105px;top:387px;">乌苏</div>
<div class="cell" style="left:295px;width:105px;top:387px;color:#5a5a5a;font-size:16px;letter-spacing:-0.6px;top:388px">WS</div>
<div class="cell" style="left:400px;width:101px;top:387px;color:#5a5a5a;font-size:16px;letter-spacing:-0.6px;top:388px">12</div>
<div class="cell" style="left:501px;width:105px;top:387px;">普通</div>
<div class="cell" style="left:606px;width:101px;top:387px;color:#5a5a5a;font-size:16px;letter-spacing:-0.6px;top:388px">0</div>
<div class="cell" style="left:707px;width:105px;top:387px;"></div>
<div class="cell" style="left:812px;width:105px;top:387px;">酒水饮料</div>
<div class="cell" style="left:917px;width:105px;top:387px;">纳客火锅店</div>
<div class="cell" style="left:1022px;width:161px;top:387px;color:#5a5a5a;font-size:16px;letter-spacing:-0.5px;top:388px">2024-08-04 15:38:31</div>
<div class="sw" style="left:1211px;top:386px"><i></i></div>
<div class="sw" style="left:1312px;top:386px"><i></i></div>
<div class="ob" style="left:1440px;top:386px;border-color:#19be8f;color:#19be8f">详情</div>
<div class="ob" style="left:1490px;top:386px;border-color:#ffbe00;color:#ffbe00">编辑</div>
<div class="ob" style="left:1540px;top:386px;border-color:#ff3d3d;color:#ff3d3d">删除</div>
<div class="cb" style="left:16px;top:427px"></div>
<div class="cell" style="left:49px;width:141px;top:426px;color:#1d6dcf;font-size:16px;letter-spacing:-0.6px;top:427px">20240804153757</div>
<div class="cell" style="left:190px;width:105px;top:426px;">雪花</div>
<div class="cell" style="left:295px;width:105px;top:426px;color:#5a5a5a;font-size:16px;letter-spacing:-0.6px;top:427px">XH</div>
<div class="cell" style="left:400px;width:101px;top:426px;color:#5a5a5a;font-size:16px;letter-spacing:-0.6px;top:427px">8</div>
<div class="cell" style="left:501px;width:105px;top:426px;">普通</div>
<div class="cell" style="left:606px;width:101px;top:426px;color:#5a5a5a;font-size:16px;letter-spacing:-0.6px;top:427px">0</div>
<div class="cell" style="left:707px;width:105px;top:426px;"></div>
<div class="cell" style="left:812px;width:105px;top:426px;">酒水饮料</div>
<div class="cell" style="left:917px;width:105px;top:426px;">纳客火锅店</div>
<div class="cell" style="left:1022px;width:161px;top:426px;color:#5a5a5a;font-size:16px;letter-spacing:-0.5px;top:427px">2024-08-04 15:38:08</div>
<div class="sw" style="left:1211px;top:425px"><i></i></div>
<div class="sw" style="left:1312px;top:425px"><i></i></div>
<div class="ob" style="left:1440px;top:425px;border-color:#19be8f;color:#19be8f">详情</div>
<div class="ob" style="left:1490px;top:425px;border-color:#ffbe00;color:#ffbe00">编辑</div>
<div class="ob" style="left:1540px;top:425px;border-color:#ff3d3d;color:#ff3d3d">删除</div>
<div class="cb" style="left:16px;top:466px"></div>
<div class="cell" style="left:49px;width:141px;top:465px;color:#1d6dcf;font-size:16px;letter-spacing:-0.6px;top:466px">20240804153702</div>
<div class="cell" style="left:190px;width:105px;top:465px;">芭乐饮料</div>
<div class="cell" style="left:295px;width:105px;top:465px;color:#5a5a5a;font-size:16px;letter-spacing:-0.6px;top:466px">BYYL</div>
<div class="cell" style="left:400px;width:101px;top:465px;color:#5a5a5a;font-size:16px;letter-spacing:-0.6px;top:466px">28</div>
<div class="cell" style="left:501px;width:105px;top:465px;">普通</div>
<div class="cell" style="left:606px;width:101px;top:465px;color:#5a5a5a;font-size:16px;letter-spacing:-0.6px;top:466px">0</div>
<div class="cell" style="left:707px;width:105px;top:465px;"></div>
<div class="cell" style="left:812px;width:105px;top:465px;">酒水饮料</div>
<div class="cell" style="left:917px;width:105px;top:465px;">纳客火锅店</div>
<div class="cell" style="left:1022px;width:161px;top:465px;color:#5a5a5a;font-size:16px;letter-spacing:-0.5px;top:466px">2024-08-04 15:37:29</div>
<div class="sw" style="left:1211px;top:464px"><i></i></div>
<div class="sw" style="left:1312px;top:464px"><i></i></div>
<div class="ob" style="left:1440px;top:464px;border-color:#19be8f;color:#19be8f">详情</div>
<div class="ob" style="left:1490px;top:464px;border-color:#ffbe00;color:#ffbe00">编辑</div>
<div class="ob" style="left:1540px;top:464px;border-color:#ff3d3d;color:#ff3d3d">删除</div>
<div class="cb" style="left:16px;top:505px"></div>
<div class="cell" style="left:49px;width:141px;top:504px;color:#1d6dcf;font-size:16px;letter-spacing:-0.6px;top:505px">20240804153539</div>
<div class="cell" style="left:190px;width:105px;top:504px;">美年达</div>
<div class="cell" style="left:295px;width:105px;top:504px;color:#5a5a5a;font-size:16px;letter-spacing:-0.6px;top:505px">MND</div>
<div class="cell" style="left:400px;width:101px;top:504px;color:#5a5a5a;font-size:16px;letter-spacing:-0.6px;top:505px">5</div>
<div class="cell" style="left:501px;width:105px;top:504px;">普通</div>
<div class="cell" style="left:606px;width:101px;top:504px;color:#5a5a5a;font-size:16px;letter-spacing:-0.6px;top:505px">0</div>
<div class="cell" style="left:707px;width:105px;top:504px;"></div>
<div class="cell" style="left:812px;width:105px;top:504px;">酒水饮料</div>
<div class="cell" style="left:917px;width:105px;top:504px;">纳客火锅店</div>
<div class="cell" style="left:1022px;width:161px;top:504px;color:#5a5a5a;font-size:16px;letter-spacing:-0.5px;top:505px">2024-08-04 15:36:22</div>
<div class="sw" style="left:1211px;top:503px"><i></i></div>
<div class="sw" style="left:1312px;top:503px"><i></i></div>
<div class="ob" style="left:1440px;top:503px;border-color:#19be8f;color:#19be8f">详情</div>
<div class="ob" style="left:1490px;top:503px;border-color:#ffbe00;color:#ffbe00">编辑</div>
<div class="ob" style="left:1540px;top:503px;border-color:#ff3d3d;color:#ff3d3d">删除</div>
<div class="cb" style="left:16px;top:544px"></div>
<div class="cell" style="left:49px;width:141px;top:543px;color:#1d6dcf;font-size:16px;letter-spacing:-0.6px;top:544px">20240804153521</div>
<div class="cell" style="left:190px;width:105px;top:543px;">减脂面</div>
<div class="cell" style="left:295px;width:105px;top:543px;color:#5a5a5a;font-size:16px;letter-spacing:-0.6px;top:544px">JZM</div>
<div class="cell" style="left:400px;width:101px;top:543px;color:#5a5a5a;font-size:16px;letter-spacing:-0.6px;top:544px">19</div>
<div class="cell" style="left:501px;width:105px;top:543px;">普通</div>
<div class="cell" style="left:606px;width:101px;top:543px;color:#5a5a5a;font-size:16px;letter-spacing:-0.6px;top:544px">0</div>
<div class="cell" style="left:707px;width:105px;top:543px;"></div>
<div class="cell" style="left:812px;width:105px;top:543px;">主食</div>
<div class="cell" style="left:917px;width:105px;top:543px;">纳客火锅店</div>
<div class="cell" style="left:1022px;width:161px;top:543px;color:#5a5a5a;font-size:16px;letter-spacing:-0.5px;top:544px">2024-08-04 15:35:36</div>
<div class="sw" style="left:1211px;top:542px"><i></i></div>
<div class="sw" style="left:1312px;top:542px"><i></i></div>
<div class="ob" style="left:1440px;top:542px;border-color:#19be8f;color:#19be8f">详情</div>
<div class="ob" style="left:1490px;top:542px;border-color:#ffbe00;color:#ffbe00">编辑</div>
<div class="ob" style="left:1540px;top:542px;border-color:#ff3d3d;color:#ff3d3d">删除</div>
<div class="cb" style="left:16px;top:583px"></div>
<div class="cell" style="left:49px;width:141px;top:582px;color:#1d6dcf;font-size:16px;letter-spacing:-0.6px;top:583px">20240804153421</div>
<div class="cell" style="left:190px;width:105px;top:582px;">生煎包</div>
<div class="cell" style="left:295px;width:105px;top:582px;color:#5a5a5a;font-size:16px;letter-spacing:-0.6px;top:583px">SJB</div>
<div class="cell" style="left:400px;width:101px;top:582px;color:#5a5a5a;font-size:16px;letter-spacing:-0.6px;top:583px">28</div>
<div class="cell" style="left:501px;width:105px;top:582px;">普通</div>
<div class="cell" style="left:606px;width:101px;top:582px;color:#5a5a5a;font-size:16px;letter-spacing:-0.6px;top:583px">0</div>
<div class="cell" style="left:707px;width:105px;top:582px;"></div>
<div class="cell" style="left:812px;width:105px;top:582px;">主食</div>
<div class="cell" style="left:917px;width:105px;top:582px;">纳客火锅店</div>
<div class="cell" style="left:1022px;width:161px;top:582px;color:#5a5a5a;font-size:16px;letter-spacing:-0.5px;top:583px">2024-08-04 15:34:56</div>
<div class="sw" style="left:1211px;top:581px"><i></i></div>
<div class="sw" style="left:1312px;top:581px"><i></i></div>
<div class="ob" style="left:1440px;top:581px;border-color:#19be8f;color:#19be8f">详情</div>
<div class="ob" style="left:1490px;top:581px;border-color:#ffbe00;color:#ffbe00">编辑</div>
<div class="ob" style="left:1540px;top:581px;border-color:#ff3d3d;color:#ff3d3d">删除</div>
<div class="cb" style="left:16px;top:622px"></div>
<div class="cell" style="left:49px;width:141px;top:621px;color:#1d6dcf;font-size:16px;letter-spacing:-0.6px;top:622px">20240804153342</div>
<div class="cell" style="left:190px;width:105px;top:621px;">虾肉饺子</div>
<div class="cell" style="left:295px;width:105px;top:621px;color:#5a5a5a;font-size:16px;letter-spacing:-0.6px;top:622px">XRJZ</div>
<div class="cell" style="left:400px;width:101px;top:621px;color:#5a5a5a;font-size:16px;letter-spacing:-0.6px;top:622px">38</div>
<div class="cell" style="left:501px;width:105px;top:621px;">普通</div>
<div class="cell" style="left:606px;width:101px;top:621px;color:#5a5a5a;font-size:16px;letter-spacing:-0.6px;top:622px">0</div>
<div class="cell" style="left:707px;width:105px;top:621px;"></div>
<div class="cell" style="left:812px;width:105px;top:621px;">主食</div>
<div class="cell" style="left:917px;width:105px;top:621px;">纳客火锅店</div>
<div class="cell" style="left:1022px;width:161px;top:621px;color:#5a5a5a;font-size:16px;letter-spacing:-0.5px;top:622px">2024-08-04 15:34:19</div>
<div class="sw" style="left:1211px;top:620px"><i></i></div>
<div class="sw" style="left:1312px;top:620px"><i></i></div>
<div class="ob" style="left:1440px;top:620px;border-color:#19be8f;color:#19be8f">详情</div>
<div class="ob" style="left:1490px;top:620px;border-color:#ffbe00;color:#ffbe00">编辑</div>
<div class="ob" style="left:1540px;top:620px;border-color:#ff3d3d;color:#ff3d3d">删除</div>
<div class="cb" style="left:16px;top:661px"></div>
<div class="cell" style="left:49px;width:141px;top:660px;color:#1d6dcf;font-size:16px;letter-spacing:-0.6px;top:661px">20240804153314</div>
<div class="cell" style="left:190px;width:105px;top:660px;">杂粮锅</div>
<div class="cell" style="left:295px;width:105px;top:660px;color:#5a5a5a;font-size:16px;letter-spacing:-0.6px;top:661px">ZLG</div>
<div class="cell" style="left:400px;width:101px;top:660px;color:#5a5a5a;font-size:16px;letter-spacing:-0.6px;top:661px">39</div>
<div class="cell" style="left:501px;width:105px;top:660px;">普通</div>
<div class="cell" style="left:606px;width:101px;top:660px;color:#5a5a5a;font-size:16px;letter-spacing:-0.6px;top:661px">0</div>
<div class="cell" style="left:707px;width:105px;top:660px;"></div>
<div class="cell" style="left:812px;width:105px;top:660px;">主食</div>
<div class="cell" style="left:917px;width:105px;top:660px;">纳客火锅店</div>
<div class="cell" style="left:1022px;width:161px;top:660px;color:#5a5a5a;font-size:16px;letter-spacing:-0.5px;top:661px">2024-08-04 15:33:39</div>
<div class="sw" style="left:1211px;top:659px"><i></i></div>
<div class="sw" style="left:1312px;top:659px"><i></i></div>
<div class="ob" style="left:1440px;top:659px;border-color:#19be8f;color:#19be8f">详情</div>
<div class="ob" style="left:1490px;top:659px;border-color:#ffbe00;color:#ffbe00">编辑</div>
<div class="ob" style="left:1540px;top:659px;border-color:#ff3d3d;color:#ff3d3d">删除</div>
<div class="cb" style="left:16px;top:700px"></div>
<div class="cell" style="left:49px;width:141px;top:699px;color:#1d6dcf;font-size:16px;letter-spacing:-0.6px;top:700px">20240804153217</div>
<div class="cell" style="left:190px;width:105px;top:699px;">豆皮</div>
<div class="cell" style="left:295px;width:105px;top:699px;color:#5a5a5a;font-size:16px;letter-spacing:-0.6px;top:700px">DP</div>
<div class="cell" style="left:400px;width:101px;top:699px;color:#5a5a5a;font-size:16px;letter-spacing:-0.6px;top:700px">18</div>
<div class="cell" style="left:501px;width:105px;top:699px;">普通</div>
<div class="cell" style="left:606px;width:101px;top:699px;color:#5a5a5a;font-size:16px;letter-spacing:-0.6px;top:700px">0</div>
<div class="cell" style="left:707px;width:105px;top:699px;"></div>
<div class="cell" style="left:812px;width:105px;top:699px;">素菜类</div>
<div class="cell" style="left:917px;width:105px;top:699px;">纳客火锅店</div>
<div class="cell" style="left:1022px;width:161px;top:699px;color:#5a5a5a;font-size:16px;letter-spacing:-0.5px;top:700px">2024-08-04 15:32:46</div>
<div class="sw" style="left:1211px;top:698px"><i></i></div>
<div class="sw" style="left:1312px;top:698px"><i></i></div>
<div class="ob" style="left:1440px;top:698px;border-color:#19be8f;color:#19be8f">详情</div>
<div class="ob" style="left:1490px;top:698px;border-color:#ffbe00;color:#ffbe00">编辑</div>
<div class="ob" style="left:1540px;top:698px;border-color:#ff3d3d;color:#ff3d3d">删除</div>
<div class="cb" style="left:16px;top:739px"></div>
<div class="cell" style="left:49px;width:141px;top:738px;color:#1d6dcf;font-size:16px;letter-spacing:-0.6px;top:739px">20240804153138</div>
<div class="cell" style="left:190px;width:105px;top:738px;">素菜拼盘</div>
<div class="cell" style="left:295px;width:105px;top:738px;color:#5a5a5a;font-size:16px;letter-spacing:-0.6px;top:739px">SCPP</div>
<div class="cell" style="left:400px;width:101px;top:738px;color:#5a5a5a;font-size:16px;letter-spacing:-0.6px;top:739px">18</div>
<div class="cell" style="left:501px;width:105px;top:738px;">普通</div>
<div class="cell" style="left:606px;width:101px;top:738px;color:#5a5a5a;font-size:16px;letter-spacing:-0.6px;top:739px">0</div>
<div class="cell" style="left:707px;width:105px;top:738px;"></div>
<div class="cell" style="left:812px;width:105px;top:738px;">素菜类</div>
<div class="cell" style="left:917px;width:105px;top:738px;">纳客火锅店</div>
<div class="cell" style="left:1022px;width:161px;top:738px;color:#5a5a5a;font-size:16px;letter-spacing:-0.5px;top:739px">2024-08-04 15:32:14</div>
<div class="sw" style="left:1211px;top:737px"><i></i></div>
<div class="sw" style="left:1312px;top:737px"><i></i></div>
<div class="ob" style="left:1440px;top:737px;border-color:#19be8f;color:#19be8f">详情</div>
<div class="ob" style="left:1490px;top:737px;border-color:#ffbe00;color:#ffbe00">编辑</div>
<div class="ob" style="left:1540px;top:737px;border-color:#ff3d3d;color:#ff3d3d">删除</div>
</div>
</body></html>
